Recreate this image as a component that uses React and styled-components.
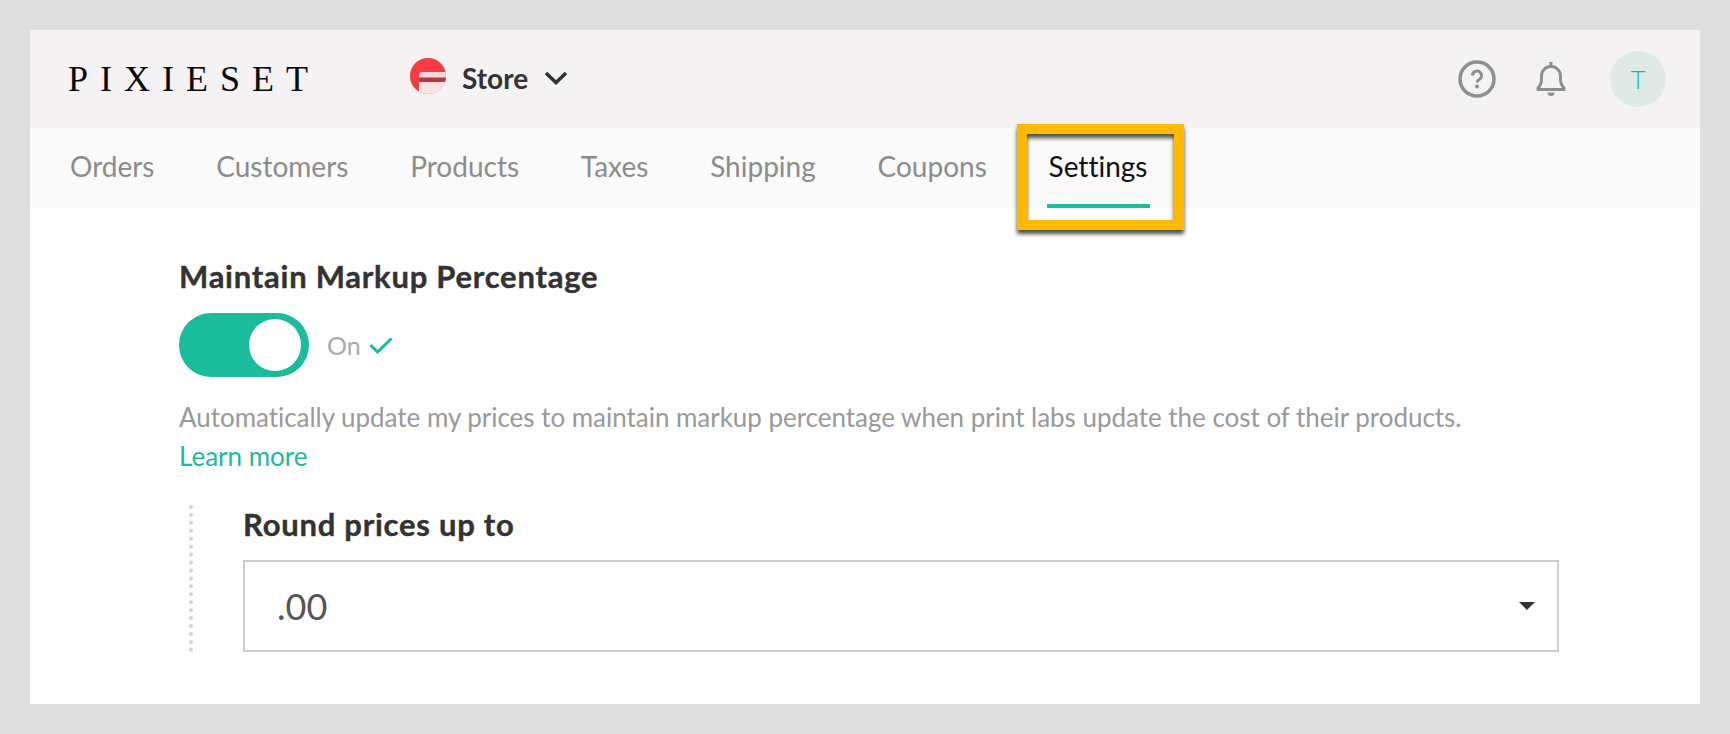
import React from 'react';
import styled, { createGlobalStyle } from 'styled-components';

const GlobalStyle = createGlobalStyle`
  html, body {
    margin: 0;
    padding: 0;
    background: #dedede;
  }
  body {
    font-family: Lato, "Open Sans", sans-serif;
    font-variant-ligatures: none;
  }
`;

const Page = styled.div`
  width: 1730px;
  height: 734px;
  padding: 30px;
  box-sizing: border-box;
  background: #dedede;
`;

const Card = styled.div`
  height: 674px;
  background: #fff;
  display: flex;
  flex-direction: column;
`;

const Header = styled.header`
  height: 98px;
  flex: none;
  background: #f4f2f3;
  display: flex;
  align-items: center;
  padding: 0 34px 0 38px;
`;

const Logo = styled.div`
  width: 280px;
  margin-right: 62px;
  font-family: "Liberation Serif", serif;
  font-size: 36px;
  letter-spacing: 12px;
  color: #0a0a0a;
  white-space: nowrap;
`;

const StoreSwitch = styled.div`
  display: flex;
  align-items: center;
`;

const StoreMark = styled.svg`
  display: block;
  margin-bottom: 6px;
`;

const StoreName = styled.span`
  margin: 0 16px 2px 16px;
  font-size: 28px;
  font-weight: 700;
  color: #333;
`;

const StoreChevron = styled.svg`
  display: block;
  margin-bottom: 2px;
`;

const Actions = styled.div`
  margin-left: auto;
  display: flex;
  align-items: center;
`;

const ActionIcon = styled.svg`
  display: block;
  margin-right: ${(props) => props.$gap}px;
`;

const Avatar = styled.div`
  width: 56px;
  height: 56px;
  border-radius: 50%;
  background: #dfe9e6;
  color: #1abc9c;
  font-size: 26px;
  font-weight: 300;
  display: flex;
  align-items: center;
  justify-content: center;
`;

const Nav = styled.nav`
  height: 80px;
  flex: none;
  background: #fafafa;
  display: flex;
  padding-left: 40px;
  gap: 61.8px;
`;

const Tab = styled.a`
  position: relative;
  display: flex;
  align-items: center;
  height: 100%;
  padding-bottom: 4px;
  box-sizing: border-box;
  font-size: 28px;
  color: ${(props) => (props.$active ? '#111' : '#8c8c8c')};
`;

const Underline = styled.span`
  position: absolute;
  left: -2px;
  right: -3px;
  bottom: 0;
  height: 4px;
  background: #1abc9c;
`;

const Highlight = styled.span`
  position: absolute;
  left: -32px;
  right: -37px;
  top: -4px;
  height: 106px;
  box-sizing: border-box;
  border: 10px solid #ffb900;
  box-shadow: 0 4px 4px rgba(0, 0, 0, 0.7), inset 0 4px 4px rgba(0, 0, 0, 0.7);
`;

const Content = styled.main`
  padding: 50px 0 0 149px;
  width: 1529px;
  box-sizing: border-box;
`;

const Title = styled.h2`
  margin: 0;
  font-size: 31px;
  line-height: 36px;
  letter-spacing: 0.75px;
  font-weight: 700;
  color: #333;
  -webkit-text-stroke: 0.4px #333;
`;

const ToggleRow = styled.div`
  margin-top: 19px;
  display: flex;
  align-items: center;
`;

const Toggle = styled.div`
  width: 130px;
  height: 64px;
  padding: 6px 8px;
  box-sizing: border-box;
  border-radius: 32px;
  background: #1abc9c;
  display: flex;
  justify-content: flex-end;
`;

const Knob = styled.span`
  width: 52px;
  height: 52px;
  border-radius: 50%;
  background: #fff;
`;

const ToggleLabel = styled.span`
  margin-left: 18px;
  margin-right: 8px;
  font-size: 25px;
  color: #aaa;
`;

const Description = styled.p`
  margin: 21px 0 0;
  font-size: 26px;
  line-height: 39px;
  letter-spacing: -0.03px;
  color: #999;
`;

const LearnMore = styled.a`
  display: block;
  font-size: 26px;
  line-height: 39px;
  color: #1abc9c;
`;

const SubSection = styled.section`
  margin-top: 29px;
  display: flex;
`;

const DottedRule = styled.div`
  width: 0;
  margin-left: 10px;
  margin-right: 50px;
  border-left: 4px dotted #d4d4d4;
`;

const SubBody = styled.div`
  flex: 1;
`;

const SubTitle = styled.h3`
  margin: 1px 0 18px;
  font-size: 31px;
  line-height: 36px;
  letter-spacing: 0.75px;
  font-weight: 700;
  color: #333;
  -webkit-text-stroke: 0.4px #333;
`;

const SelectBox = styled.div`
  height: 92px;
  box-sizing: border-box;
  border: 2px solid #ccc;
  padding: 0 22px 0 32px;
  display: flex;
  align-items: center;
  justify-content: space-between;
`;

const SelectValue = styled.span`
  font-size: 36px;
  color: #555;
`;

const Caret = styled.span`
  width: 0;
  height: 0;
  border-left: 8px solid transparent;
  border-right: 8px solid transparent;
  border-top: 8px solid #333;
`;

const tabs = ['Orders', 'Customers', 'Products', 'Taxes', 'Shipping', 'Coupons'];

const App = () => {
  return (
    <Page>
      <GlobalStyle />
      <Card>
        <Header>
          <Logo>PIXIESET</Logo>
          <StoreSwitch>
            <StoreMark width="36" height="36" viewBox="0 0 36 36">
              <defs>
                <clipPath id="storeClip">
                  <circle cx="18" cy="18" r="18" />
                </clipPath>
              </defs>
              <g clipPath="url(#storeClip)">
                <rect width="36" height="36" fill="#f93a43" />
                <path d="M9 36V18a4 4 0 0 1 4-4h23v6H9z" fill="#fbd9dc" />
                <rect x="9" y="19.500" width="27" height="4.500" fill="#b9373d" />
                <rect x="9" y="24" width="27" height="12" fill="#fce4e6" />
              </g>
            </StoreMark>
            <StoreName>Store</StoreName>
            <StoreChevron width="24" height="14" viewBox="0 0 24 14" fill="none">
              <path d="M2 2l10 9.500L22 2" stroke="#333" strokeWidth="3.500" />
            </StoreChevron>
          </StoreSwitch>
          <Actions>
            <ActionIcon $gap={40} width="38" height="38" viewBox="0 0 38 38" fill="none">
              <circle cx="19" cy="19" r="17" stroke="#8f8f8f" strokeWidth="3.500" />
              <path d="M14.500 15.500a4.500 4.500 0 1 1 7 3.700c-1.600 1-2.500 1.600-2.500 3.300" stroke="#8f8f8f" strokeWidth="3" />
              <circle cx="19" cy="26.500" r="1.900" fill="#8f8f8f" />
            </ActionIcon>
            <ActionIcon $gap={44} width="30" height="36" viewBox="0 0 30 36" fill="none">
              <path d="M2 27c2-2 3.500-4 3.500-9v-3a9.500 9.500 0 0 1 19 0v3c0 5 1.500 7 3.500 9v1.500H2z" stroke="#8f8f8f" strokeWidth="3" strokeLinejoin="round" />
              <path d="M15 5V1" stroke="#8f8f8f" strokeWidth="3" />
              <path d="M11.500 31.500h7a3.500 3.500 0 0 1-7 0z" fill="#8f8f8f" />
            </ActionIcon>
            <Avatar>T</Avatar>
          </Actions>
        </Header>
        <Nav>
          {tabs.map((tab) => (
            <Tab key={tab}>{tab}</Tab>
          ))}
          <Tab $active>
            Settings
            <Underline />
            <Highlight />
          </Tab>
        </Nav>
        <Content>
          <Title>Maintain Markup Percentage</Title>
          <ToggleRow>
            <Toggle>
              <Knob />
            </Toggle>
            <ToggleLabel>On</ToggleLabel>
            <svg width="24" height="17" viewBox="0 0 24 17" fill="none">
              <path d="M1.500 8l7 7L22.500 1.500" stroke="#1abc9c" strokeWidth="3" />
            </svg>
          </ToggleRow>
          <Description>
            Automatically update my prices to maintain markup percentage when print labs update the cost of their products.
          </Description>
          <LearnMore>Learn more</LearnMore>
          <SubSection>
            <DottedRule />
            <SubBody>
              <SubTitle>Round prices up to</SubTitle>
              <SelectBox>
                <SelectValue>.00</SelectValue>
                <Caret />
              </SelectBox>
            </SubBody>
          </SubSection>
        </Content>
      </Card>
    </Page>
  );
};

export default App;
